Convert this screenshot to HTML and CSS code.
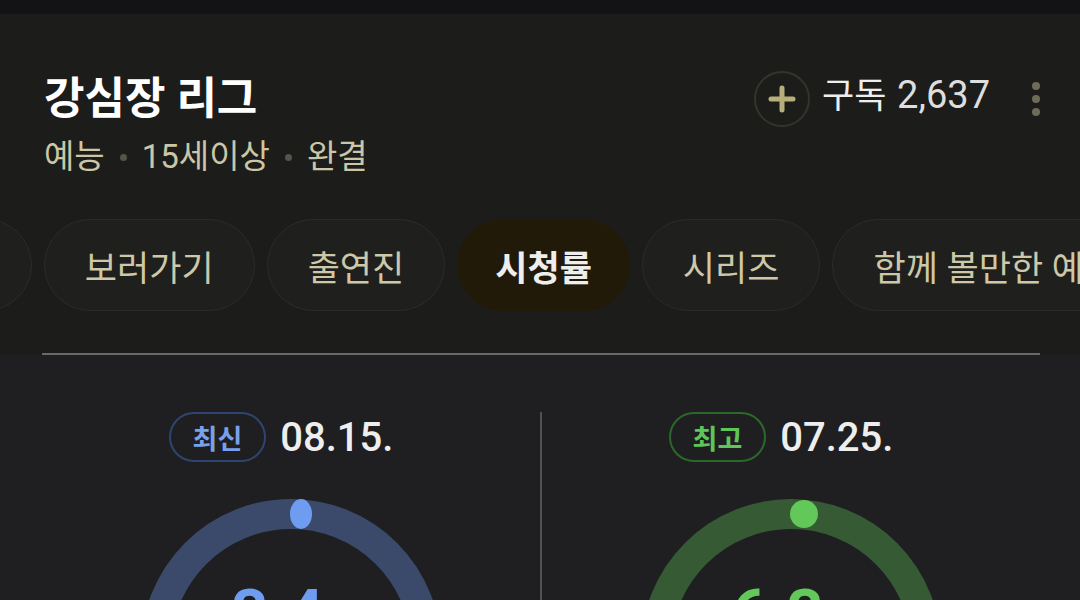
FILE: index.html
```html
<!DOCTYPE html>
<html lang="ko">
<head>
    <meta charset="UTF-8">
    <meta name="viewport" content="width=device-width, initial-scale=1.0">
    <title>강심장 리그 - 시청률</title>
    <link rel="stylesheet" href="styles.css">
</head>
<body>
    <div class="status-bar"></div>

    <div class="header">
        <div class="title-row">
            <h1 class="title">강심장 리그</h1>
            <div class="actions">
                <button class="plus-btn" aria-label="구독">
                    <svg width="28" height="28" viewBox="0 0 28 28">
                        <path d="M14 3 V25 M3 14 H25" stroke="#b7af7a" stroke-width="5" stroke-linecap="round"/>
                    </svg>
                </button>
                <span class="subscribe">구독 <span class="count">2,637</span></span>
                <div class="kebab">
                    <span></span><span></span><span></span>
                </div>
            </div>
        </div>
        <p class="meta">예능<span class="dot"></span>15세이상<span class="dot"></span>완결</p>

        <div class="tabs">
            <div class="tab">회차정보</div>
            <div class="tab">보러가기</div>
            <div class="tab">출연진</div>
            <div class="tab active">시청률</div>
            <div class="tab">시리즈</div>
            <div class="tab">함께 볼만한 예능</div>
        </div>

        <div class="divider"></div>
    </div>

    <div class="stats">
        <div class="stat">
            <div class="stat-head">
                <span class="badge blue">최신</span>
                <span class="date">08.15.</span>
            </div>
            <div class="ring">
                <svg width="300" height="300" viewBox="0 0 300 300">
                    <circle cx="150" cy="150" r="135" fill="none" stroke="#3b4a6a" stroke-width="30"/>
                    <ellipse cx="160" cy="15" rx="11" ry="15" fill="#6e9cf0"/>
                </svg>
                <div class="ring-value blue-text">3.4<small>%</small></div>
            </div>
        </div>

        <div class="vline"></div>

        <div class="stat">
            <div class="stat-head">
                <span class="badge green">최고</span>
                <span class="date">07.25.</span>
            </div>
            <div class="ring">
                <svg width="300" height="300" viewBox="0 0 300 300">
                    <circle cx="150" cy="150" r="135" fill="none" stroke="#355a34" stroke-width="30"/>
                    <circle cx="163" cy="15" r="14" fill="#62c85a"/>
                </svg>
                <div class="ring-value green-text">6.3<small>%</small></div>
            </div>
        </div>
    </div>
</body>
</html>
```

FILE: styles.css
```css
html {
    overflow: hidden;
}

body {
    margin: 0;
    width: 1080px;
    height: 600px;
    overflow: hidden;
    background-color: #1f1f21;
    font-family: Roboto, "Noto Sans CJK KR", sans-serif;
    color: #ececec;
}

.status-bar {
    height: 14px;
    background-color: #131316;
}

.header {
    background-color: #1c1c1b;
    padding-top: 57px;
    overflow: hidden;
}

.title-row {
    display: flex;
    align-items: center;
    justify-content: space-between;
    padding: 0 40px 0 44px;
}

.title {
    margin: 0;
    font-size: 44px;
    line-height: 50px;
    font-weight: 700;
    color: #ffffff;
}

.actions {
    display: flex;
    align-items: center;
}

.plus-btn {
    width: 56px;
    height: 56px;
    padding: 0;
    border: 2px solid #35342a;
    border-radius: 50%;
    background: none;
    display: flex;
    align-items: center;
    justify-content: center;
}

.subscribe {
    margin-left: 12px;
    font-size: 35px;
    line-height: 40px;
    color: #eeeeee;
    position: relative;
    top: -3px;
}

.count {
    font-size: 38px;
    margin-left: 2px;
    color: #dedede;
}

.kebab {
    display: flex;
    flex-direction: column;
    gap: 5px;
    margin-left: 42px;
}

.kebab span {
    width: 8px;
    height: 8px;
    border-radius: 50%;
    background-color: #6e6b59;
}

.meta {
    margin: 11px 0 0;
    padding-left: 44px;
    font-size: 33px;
    line-height: 38px;
    color: #cbc6a5;
    display: flex;
    align-items: center;
}

.meta .dot {
    width: 7px;
    height: 7px;
    border-radius: 50%;
    background-color: #55534a;
    margin: 0 15px;
}

.tabs {
    display: flex;
    gap: 12px;
    margin-top: 43px;
    margin-left: -179px;
    white-space: nowrap;
}

.tab {
    flex-shrink: 0;
    box-sizing: border-box;
    height: 92px;
    padding: 0 40px;
    display: flex;
    align-items: center;
    border: 1px solid #2d2b25;
    border-radius: 46px;
    background-color: #1f1f1e;
    font-size: 35px;
    color: #cdc8a8;
}

.tab.active {
    padding: 0 37px;
    border-color: #221a09;
    background-color: #221a09;
    color: #eeeeee;
    font-weight: 700;
}

.divider {
    height: 2px;
    margin: 42px 40px 0 42px;
    background-color: #686868;
}

.stats {
    display: flex;
    padding: 57px 40px 0 42px;
}

.stat {
    flex: 1;
    display: flex;
    flex-direction: column;
    align-items: center;
}

.vline {
    width: 2px;
    height: 200px;
    background-color: #505154;
}

.stat-head {
    display: flex;
    align-items: center;
    gap: 14px;
    padding-right: 20px;
}

.badge {
    box-sizing: border-box;
    height: 50px;
    padding: 0 22px;
    border: 2px solid;
    border-radius: 25px;
    display: flex;
    align-items: center;
    font-size: 27px;
    font-weight: 700;
}

.badge.blue {
    border-color: #2d4670;
    color: #79a1ea;
}

.badge.green {
    border-color: #2c6829;
    color: #5ec658;
}

.date {
    font-size: 40px;
    font-weight: 500;
    color: #eeeeee;
}

.ring {
    position: relative;
    margin-top: 37px;
    width: 300px;
    height: 300px;
}

.ring svg {
    display: block;
}

.ring-value {
    position: absolute;
    left: 0;
    right: 0;
    top: 77px;
    text-align: center;
    font-size: 64px;
    font-weight: 700;
}

.ring-value small {
    font-size: 36px;
}

.blue-text {
    color: #6e9cf0;
}

.green-text {
    color: #62c85a;
}
```
